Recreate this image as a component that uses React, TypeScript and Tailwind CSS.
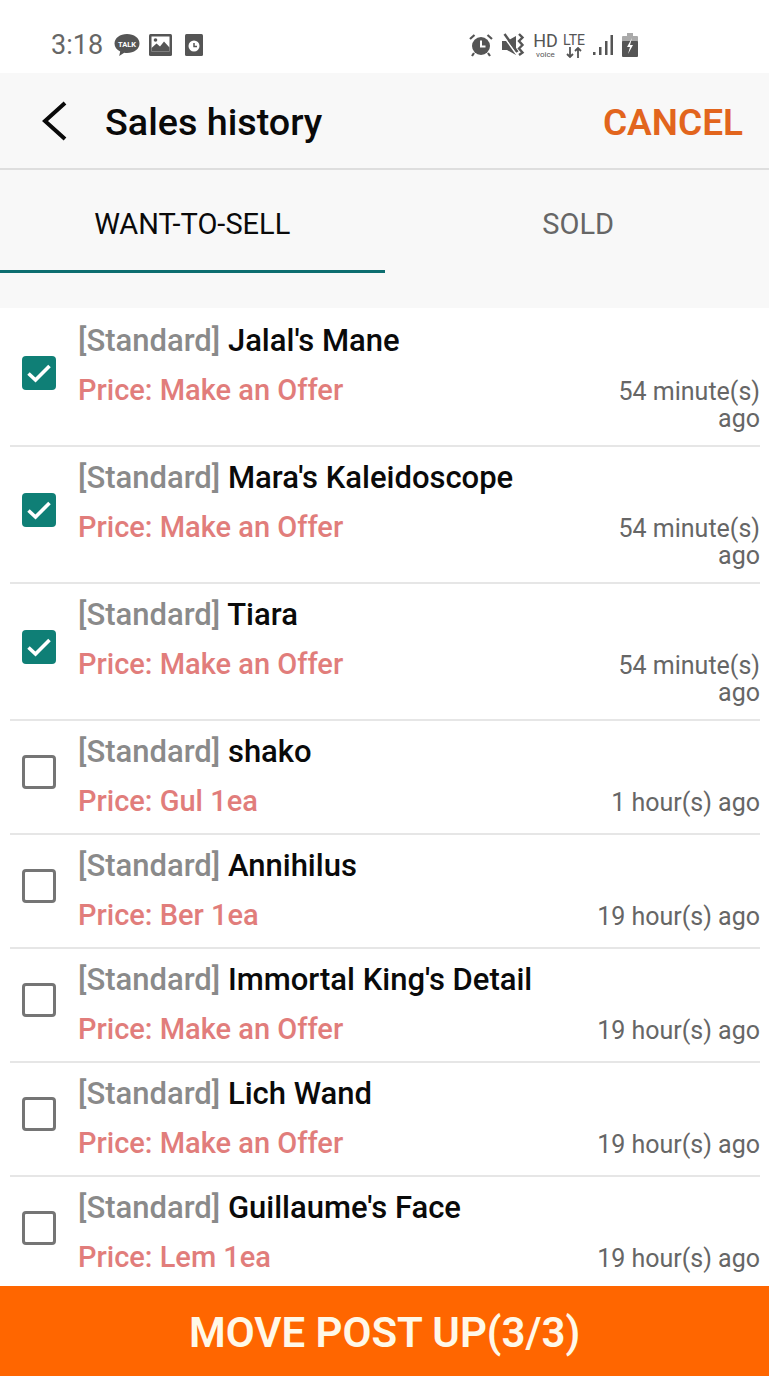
import React from "react";

const font = { fontFamily: "Roboto, sans-serif" };

type Item = { name: string; price: string; time: string[]; checked?: boolean };

const items: Item[] = [
  { name: "Jalal's Mane", price: "Make an Offer", time: ["54 minute(s)", "ago"], checked: true },
  { name: "Mara's Kaleidoscope", price: "Make an Offer", time: ["54 minute(s)", "ago"], checked: true },
  { name: "Tiara", price: "Make an Offer", time: ["54 minute(s)", "ago"], checked: true },
  { name: "shako", price: "Gul 1ea", time: ["1 hour(s) ago"] },
  { name: "Annihilus", price: "Ber 1ea", time: ["19 hour(s) ago"] },
  { name: "Immortal King's Detail", price: "Make an Offer", time: ["19 hour(s) ago"] },
  { name: "Lich Wand", price: "Make an Offer", time: ["19 hour(s) ago"] },
  { name: "Guillaume's Face", price: "Lem 1ea", time: ["19 hour(s) ago"] },
];

function Checkbox({ checked }: { checked?: boolean }) {
  if (checked) {
    return (
      <div className="w-[34px] h-[34px] shrink-0 rounded-[4px] bg-[#0f7f76] flex items-center justify-center mb-[10px]">
        <svg width="30" height="30" viewBox="0 0 30 30" fill="none">
          <path d="M4.500 15.500l7 6.500L25.500 8" stroke="#ffffff" strokeWidth="3.600" />
        </svg>
      </div>
    );
  }
  return <div className="w-[34px] h-[34px] shrink-0 rounded-[4px] border-[3px] border-[#757575] bg-white mb-[10px]" />;
}

function Row({ item }: { item: Item }) {
  return (
    <div className="ml-[10px] mr-[9px] flex items-center border-b-2 border-[#e6e6e6] pl-[12px] gap-[22px] shrink-0">
      <Checkbox checked={item.checked} />
      <div className="flex-1 min-w-0 pt-[11px] pb-[12px]">
        <div className="h-[40px] leading-[40px] text-[31px] font-medium whitespace-nowrap">
          <span className="text-[#8a8a8a]">[Standard]</span> <span className="text-[#0a0a0a]">{item.name}</span>
        </div>
        <div className="mt-[9px] flex justify-between items-start">
          <div className="h-[40px] leading-[40px] text-[29px] font-medium text-[#e17d7b] whitespace-nowrap">
            Price: {item.price}
          </div>
          <div className="mt-[8px] mb-[1px] text-right text-[25px] leading-[27px] text-[#666666] whitespace-nowrap">
            {item.time.map((t) => (
              <div key={t}>{t}</div>
            ))}
          </div>
        </div>
      </div>
    </div>
  );
}

function StatusBar() {
  return (
    <div className="h-[73px] bg-white flex items-center pt-[17px] pl-[51px] shrink-0">
      <span className="text-[27px] leading-none text-[#666666] w-[63px]">3:18</span>
      <svg width="26" height="24" viewBox="0 0 26 24" className="shrink-0">
        <path d="M13 1C6 1 0.5 5 0.5 10.500c0 3.500 2.300 6.400 5.700 8l-1 4.500 5-3.200c1 .2 1.900.2 2.800.2 7 0 12.500-4 12.500-9.500S20 1 13 1z" fill="#555555" />
        <text x="13" y="13.500" textAnchor="middle" fontSize="7.500" fontWeight="700" fill="#ffffff">TALK</text>
      </svg>
      <svg width="23" height="22" viewBox="0 0 23 22" className="ml-[9px] shrink-0">
        <rect width="23" height="22" rx="1.500" fill="#555555" />
        <rect x="2.500" y="2.500" width="18" height="15" fill="#ffffff" />
        <path d="M2.500 17.500V14l5-4.500 3.500 3 4-5 5.500 6v4z" fill="#555555" />
        <circle cx="6.500" cy="6" r="1.800" fill="#555555" />
      </svg>
      <svg width="18" height="22" viewBox="0 0 18 22" className="ml-[13px] shrink-0">
        <rect width="18" height="22" rx="1.500" fill="#555555" />
        <circle cx="9" cy="12" r="5.500" fill="#ffffff" />
        <path d="M9 9v3.500h3" stroke="#555555" strokeWidth="1.500" fill="none" />
      </svg>
      <svg width="24" height="24" viewBox="0 0 24 24" className="ml-[266px] shrink-0">
        <circle cx="12" cy="13" r="9" fill="#555555" />
        <path d="M12 7.500V13.500h4.500" stroke="#ffffff" strokeWidth="2" fill="none" />
        <path d="M1 6l4.500-4M23 6l-4.500-4" stroke="#555555" strokeWidth="2.200" />
        <path d="M5 20l-2 3M19 20l2 3" stroke="#555555" strokeWidth="2.200" />
      </svg>
      <svg width="24" height="24" viewBox="0 0 24 24" className="ml-[8px] shrink-0">
        <path d="M1 8h5l9-5v19l-9-5H1z" fill="#555555" />
        <path d="M1 1l15 21" stroke="#ffffff" strokeWidth="1.600" />
        <path d="M3.500 1l13 18" stroke="#555555" strokeWidth="2.400" />
        <path d="M18 1l3.500 3.500-3.500 3.500 3.500 4-3.500 3.500 3.500 4-3.500 2.500" stroke="#555555" strokeWidth="2.400" fill="none" />
      </svg>
      <div className="ml-[8px] w-[25px] flex flex-col items-center text-[#555555] shrink-0">
        <span className="text-[18px] leading-[18px]">HD</span>
        <span className="text-[8px] leading-[9px]">voice</span>
      </div>
      <div className="ml-[4px] w-[24px] flex flex-col items-center text-[#555555] shrink-0">
        <span className="text-[14px] leading-[14px]">LTE</span>
        <svg width="18" height="11" viewBox="0 0 18 11">
          <path d="M5 0v10M2 7l3 3 3-3M13 11V1M10 4l3-3 3 3" stroke="#555555" strokeWidth="1.800" fill="none" />
        </svg>
      </div>
      <svg width="20" height="22" viewBox="0 0 20 22" className="ml-[7px] shrink-0">
        <rect x="0" y="18" width="2.500" height="3" fill="#555555" />
        <rect x="6" y="13" width="2.500" height="8" fill="#555555" />
        <rect x="12" y="7" width="2.500" height="14" fill="#555555" />
        <rect x="17.500" y="1" width="2.500" height="20" fill="#555555" />
      </svg>
      <svg width="16" height="24" viewBox="0 0 16 24" className="ml-[9px] shrink-0">
        <rect x="5" y="0" width="6" height="3" fill="#aaaaaa" />
        <rect x="0" y="3" width="16" height="8" rx="1" fill="#aaaaaa" />
        <rect x="0" y="8" width="16" height="16" rx="1" fill="#555555" />
        <path d="M10 5L5 14h3l-2 7 5-9H8z" fill="#ffffff" />
      </svg>
    </div>
  );
}

export default function App() {
  return (
    <div style={font} className="h-screen w-full flex flex-col overflow-hidden bg-white">
      <StatusBar />
      <div className="h-[97px] shrink-0 bg-[#f8f8f8] border-b-2 border-[#dedede] flex items-center pt-[5px] pl-[42px] pr-[26px]">
        <svg width="26" height="40" viewBox="0 0 26 40" fill="none" className="shrink-0 -mt-[5px]">
          <path d="M23 2L3 20l20 18" stroke="#0a0a0a" strokeWidth="4" />
        </svg>
        <span className="ml-[37px] text-[37.700px] font-medium text-[#0a0a0a] leading-none">Sales history</span>
        <span className="ml-auto mb-[2px] text-[37px] font-semibold text-[#e2651d] leading-none">CANCEL</span>
      </div>
      <div className="shrink-0 bg-[#f8f8f8] pb-[35px]">
        <div className="flex h-[103px]">
          <div className="w-1/2 flex items-center justify-center border-b-[3px] border-[#0d6e70] text-[29px] text-[#0a0a0a] pt-[10px]">
            WANT-TO-SELL
          </div>
          <div className="w-1/2 flex items-center justify-center text-[29px] text-[#666666] pt-[7px] pl-[3px]">SOLD</div>
        </div>
      </div>
      <div className="flex-1 min-h-0 overflow-hidden flex flex-col bg-white pt-[2px]">
        {items.map((it) => (
          <Row key={it.name} item={it} />
        ))}
      </div>
      <div className="h-[90px] shrink-0 bg-[#ff6600] flex items-center justify-center text-[42px] font-semibold text-[#fff8e8] pt-[2px]">
        MOVE POST UP(3/3)
      </div>
    </div>
  );
}
